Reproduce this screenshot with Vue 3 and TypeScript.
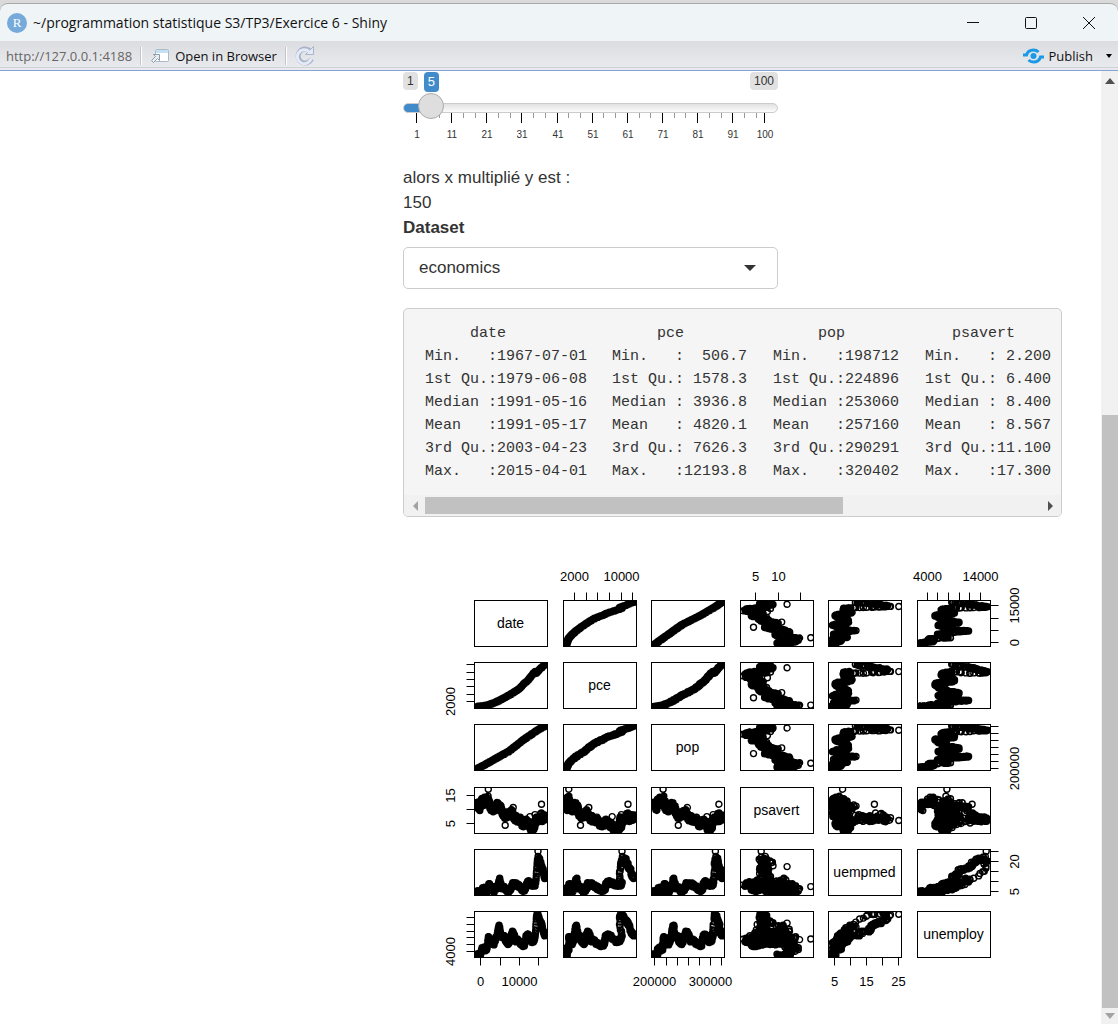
<script setup lang="ts">
import { computed, ref } from 'vue'

type Key = [number, number]
type VarName = 'date' | 'pce' | 'pop' | 'psavert' | 'uempmed' | 'unemploy'

interface Variable {
  name: VarName
  min: number
  max: number
  ticks: number[]
  first: number[]
  second: number[]
}

const y = ref(5)
const x = 30
const dataset = ref('economics')
const datasets = ['economics', 'faithfuld', 'seals']

const sliderFill = computed(() => ({ '--fill': `${((y.value - 1) / 99) * 93 + 4}%` }))

const sliderTicks = Array.from({ length: 31 }, (_, i) => {
  const value = i === 30 ? 100 : 1 + (i * 10) / 3
  return { major: i % 3 === 0, label: Math.round(value), x: Math.round(14 + ((value - 1) / 99) * 348) }
})

const summary = [
  ['     date', '     pce', '     pop', '   psavert'],
  ['Min.   :1967-07-01', 'Min.   :  506.7', 'Min.   :198712', 'Min.   : 2.200'],
  ['1st Qu.:1979-06-08', '1st Qu.: 1578.3', '1st Qu.:224896', '1st Qu.: 6.400'],
  ['Median :1991-05-16', 'Median : 3936.8', 'Median :253060', 'Median : 8.400'],
  ['Mean   :1991-05-17', 'Mean   : 4820.1', 'Mean   :257160', 'Mean   : 8.567'],
  ['3rd Qu.:2003-04-23', '3rd Qu.: 7626.3', '3rd Qu.:290291', '3rd Qu.:11.100'],
  ['Max.   :2015-04-01', 'Max.   :12193.8', 'Max.   :320402', 'Max.   :17.300'],
]

// first: labels on the top or bottom axis, second: labels on the left or right axis
const variables: Variable[] = [
  { name: 'date', min: -915, max: 16526, ticks: [0, 5000, 10000, 15000], first: [0, 10000], second: [0, 15000] },
  { name: 'pce', min: 506.7, max: 12193.8, ticks: [2000, 4000, 6000, 8000, 10000, 12000], first: [2000, 10000], second: [2000] },
  { name: 'pop', min: 198712, max: 320402, ticks: [200000, 220000, 240000, 260000, 280000, 300000, 320000], first: [200000, 300000], second: [200000] },
  { name: 'psavert', min: 2.2, max: 17.3, ticks: [5, 10, 15], first: [5, 10], second: [5, 15] },
  { name: 'uempmed', min: 4, max: 25.2, ticks: [5, 10, 15, 20, 25], first: [5, 15, 25], second: [5, 20] },
  { name: 'unemploy', min: 2685, max: 15352, ticks: [4000, 6000, 8000, 10000, 12000, 14000], first: [4000, 14000], second: [4000] },
]

// Anchor values of each series, by year
const anchors: Record<Exclude<VarName, 'date'>, Key[]> = {
  pce: [
    [1967.5, 507], [1969, 585], [1971, 680], [1973, 825], [1975, 985], [1977, 1230], [1979, 1510], [1981, 1870],
    [1983, 2180], [1985, 2630], [1987, 3000], [1989, 3500], [1991, 3900], [1993, 4380], [1995, 4880], [1997, 5440],
    [1999, 6120], [2000, 6620], [2001, 7040], [2002, 7250], [2003, 7610], [2005, 8580], [2007, 9570], [2008, 9960],
    [2008.6, 10130], [2009, 9790], [2009.5, 9830], [2010, 10060], [2011, 10480], [2012, 10960], [2013, 11250],
    [2014, 11600], [2015.25, 12194],
  ],
  pop: [
    [1967.5, 198712], [1970, 204000], [1975, 215000], [1980, 226500], [1985, 237500], [1990, 248800], [1995, 265000],
    [2000, 281000], [2005, 294800], [2010, 308600], [2015.25, 320402],
  ],
  psavert: [
    [1967.5, 12.3], [1968, 11.9], [1968.5, 11], [1969, 10.5], [1969.5, 10.8], [1970, 12.2], [1971, 13.4], [1972, 12.4],
    [1973, 12.8], [1974, 13.5], [1975, 13.4], [1975.8, 13], [1976.5, 11.4], [1977.5, 10.5], [1979, 10.3],
    [1980, 10.5], [1981, 11.2], [1982, 11.9], [1983, 10.5], [1984, 11], [1985, 9.4], [1986, 8.4], [1987, 7.5],
    [1988, 8], [1989, 8.3], [1990, 8.4], [1991, 8.7], [1992, 9.4], [1993, 7.9], [1994, 6.9], [1995, 7], [1996, 6.4],
    [1997, 6.2], [1998, 6.4], [1999, 5.2], [2000, 4.7], [2001, 5], [2002, 5.8], [2003, 5.2], [2004, 4.9], [2005, 3.6],
    [2005.7, 3.3], [2006, 3.7], [2007, 3.5], [2008, 4.2], [2008.8, 5.8], [2009.4, 6.6], [2010, 6.2], [2011, 6.5],
    [2012, 7.4], [2012.8, 8.4], [2013.2, 6.2], [2014, 6.9], [2015.25, 7.5],
  ],
  uempmed: [
    [1967.5, 4.8], [1969.5, 4.7], [1970.5, 5.1], [1971.5, 6.3], [1972.3, 6.6], [1973.5, 5.4], [1974.6, 5.2],
    [1975.3, 7.6], [1975.9, 8.6], [1977, 7.2], [1978, 6.3], [1979.5, 5.4], [1980.5, 7.1], [1981.5, 6.9],
    [1982.5, 8.8], [1983, 10.3], [1983.4, 11.3], [1983.9, 9.3], [1985, 7.2], [1986.5, 7], [1988, 6.1], [1989.5, 5.1],
    [1990.5, 5.4], [1991.5, 6.9], [1992.5, 8.7], [1993.5, 8.5], [1994.5, 9], [1996, 8.2], [1997.5, 7.6], [1999, 6.4],
    [2000.6, 5.8], [2001.5, 6.6], [2002.5, 8.9], [2003.5, 10], [2004.5, 9.3], [2006, 8.5], [2007.5, 8.4],
    [2008.4, 8.6], [2008.9, 10.2], [2009.3, 13], [2009.6, 16.6], [2010, 20], [2010.4, 22], [2011, 21.3],
    [2011.6, 21], [2012.2, 19.8], [2013, 17.4], [2014, 16], [2014.6, 13.4], [2015.25, 12],
  ],
  unemploy: [
    [1967.5, 3000], [1968.5, 2900], [1969.5, 2950], [1970, 3250], [1970.9, 4950], [1971.7, 5050], [1972.5, 4850],
    [1973.7, 4400], [1974.5, 5000], [1975.35, 8100], [1976, 7350], [1977, 7250], [1978, 6300], [1979.4, 6050],
    [1980, 6700], [1980.5, 8050], [1981.3, 8000], [1982, 9700], [1982.9, 11700], [1983.4, 11000], [1984.2, 8800],
    [1985.5, 8350], [1986.5, 8350], [1987.5, 7300], [1989.2, 6400], [1990.4, 6700], [1991.3, 8600], [1992.5, 9800],
    [1993.5, 8900], [1994.9, 7200], [1996, 7350], [1997.5, 6700], [1999, 5950], [2000.3, 5700], [2001.2, 6150],
    [2001.9, 8200], [2003.4, 9000], [2004.5, 8200], [2006, 7050], [2007, 6900], [2008, 7650], [2008.6, 9100],
    [2009, 11900], [2009.4, 14400], [2009.8, 15000], [2010.3, 14950], [2011, 14200], [2012, 12900], [2013, 12100],
    [2014, 10300], [2015.25, 8700],
  ],
}

// Month to month variation around the anchors
const spread: Record<Exclude<VarName, 'date'>, number> = {
  pce: 110,
  pop: 1300,
  psavert: 1.05,
  uempmed: 0.8,
  unemploy: 400,
}

const outliers: Record<number, [VarName, number]> = {
  94: ['psavert', 17.3],
  92: ['psavert', 14.8],
  62: ['psavert', 14.5],
  237: ['psavert', 4.5],
  305: ['psavert', 10.8],
  448: ['psavert', 7.6],
  490: ['psavert', 8.3],
  545: ['psavert', 12],
  515: ['uempmed', 25.2],
  456: ['psavert', 2.2],
}

function interpolate(keys: Key[], t: number): number {
  const next = keys.findIndex((k) => k[0] >= t)
  if (next <= 0) return next === 0 ? keys[0][1] : keys[keys.length - 1][1]
  const [t0, v0] = keys[next - 1]
  const [t1, v1] = keys[next]
  return v0 + ((v1 - v0) * (t - t0)) / (t1 - t0)
}

function noise(i: number, seed: number): number {
  const n = Math.sin(i * 12.9898 + seed * 78.233) * 43758.5453
  return (n - Math.floor(n)) * 2 - 1
}

const observations = Array.from({ length: 574 }, (_, i) => {
  const t = 1967.5 + i / 12
  const series = (name: Exclude<VarName, 'date'>, seed: number) =>
    interpolate(anchors[name], t) + noise(i, seed) * spread[name]
  const row: Record<VarName, number> = {
    date: -915 + i * 30.437,
    pce: series('pce', 4),
    pop: series('pop', 5),
    psavert: series('psavert', 1),
    uempmed: series('uempmed', 2),
    unemploy: series('unemploy', 3),
  }
  const special = outliers[i]
  if (special) row[special[0]] = special[1]
  return row
})

const PANEL_W = 73
const PANEL_H = 46
const left = (col: number) => Math.round(71 + col * 88.6) + 0.5
const top = (row: number) => Math.round(62 + row * 62.2) + 0.5

function scale(v: Variable, value: number): number {
  const pad = (v.max - v.min) * 0.04
  return (value - v.min + pad) / (v.max - v.min + 2 * pad)
}

interface Panel {
  id: string
  x: number
  y: number
  label: string
  path: string
}

const panels: Panel[] = []
variables.forEach((rowVar, r) => {
  variables.forEach((colVar, c) => {
    const px = left(c)
    const py = top(r)
    const path =
      r === c
        ? ''
        : observations
            .map((o) => {
              const cx = px + scale(colVar, o[colVar.name]) * PANEL_W
              const cy = py + PANEL_H - scale(rowVar, o[rowVar.name]) * PANEL_H
              return `M${(cx - 3).toFixed(1)} ${cy.toFixed(1)}a3 3 0 1 0 6 0a3 3 0 1 0 -6 0`
            })
            .join('')
    panels.push({ id: `p${r}${c}`, x: px, y: py, label: r === c ? rowVar.name : '', path })
  })
})

interface Tick {
  d: string
  x: number
  y: number
  text: string
  turned: boolean
}

const ticks: Tick[] = []
variables.forEach((v, i) => {
  const onTop = i % 2 === 1
  v.ticks.forEach((value) => {
    const tx = Math.floor(left(i) + scale(v, value) * PANEL_W) + 0.5
    const ty = Math.floor(top(i) + PANEL_H - scale(v, value) * PANEL_H) + 0.5
    ticks.push({
      d: onTop ? `M${tx} ${top(0)}v-8` : `M${tx} ${top(5) + PANEL_H}v8`,
      x: tx,
      y: onTop ? 43 : 448,
      text: v.first.includes(value) ? String(value) : '',
      turned: false,
    })
    ticks.push({
      d: onTop ? `M${left(0)} ${ty}h-8` : `M${left(5) + PANEL_W} ${ty}h8`,
      x: onTop ? 52 : 616,
      y: ty,
      text: v.second.includes(value) ? String(value) : '',
      turned: true,
    })
  })
})
</script>

<template>
  <div class="window">
    <header class="titlebar">
      <span class="app-icon">R</span>
      <h1>~/programmation statistique S3/TP3/Exercice 6 - Shiny</h1>
      <div class="controls">
        <button type="button" aria-label="Minimize">
          <svg width="12" height="12"><path d="M0 5.500h12" /></svg>
        </button>
        <button type="button" aria-label="Maximize">
          <svg width="12" height="12"><rect x="0.500" y="0.500" width="11" height="11" rx="1" /></svg>
        </button>
        <button type="button" aria-label="Close">
          <svg width="12" height="12"><path d="M0 0l12 12M12 0L0 12" /></svg>
        </button>
      </div>
    </header>

    <nav class="toolbar">
      <span class="url">http://127.0.0.1:4188</span>
      <span class="divider"></span>
      <button type="button" class="tool">
        <svg width="20" height="16" viewBox="0 0 20 16">
          <rect x="5.500" y="1.500" width="13" height="12" rx="1" fill="#fff" stroke="#a9b9c6" />
          <path d="M6 2h12v3H6z" fill="#c3e1f3" />
          <path d="M3.500 6.500h6v6l-2-2-4 4-2-2 4-4z" fill="#e9eef3" stroke="#8d9dab" />
        </svg>
        <span>Open in Browser</span>
      </button>
      <span class="divider"></span>
      <button type="button" class="tool reload" aria-label="Reload">
        <svg width="20" height="20" viewBox="0 0 20 20" fill="none">
          <path d="M16.500 13a7 7 0 1 1-1.500-8" stroke="#a9b3c9" stroke-width="5" />
          <path d="M10.500 8.500h8v-8z" fill="#e4eaf7" stroke="#a9b3c9" />
          <path d="M16 12.800a7 7 0 1 1-2-7.300" stroke="#e4eaf7" stroke-width="3" />
        </svg>
      </button>
      <button type="button" class="tool publish">
        <svg width="21" height="16" viewBox="0 0 21 16" fill="none" stroke="#1a9ae6" stroke-width="3">
          <circle cx="10.500" cy="8" r="3" fill="#1a9ae6" stroke="none" />
          <path d="M0 7h3.500C4.500 3.500 7.500 2 10.500 2q3 0 5 2" />
          <path d="M21 9h-3.500c-1 3.500-4 5-7 5q-3 0-5-2" />
        </svg>
        <span>Publish</span>
      </button>
      <button type="button" class="tool caret" aria-label="Publish options">
        <svg width="6" height="4"><path d="M0 0h6L3 4z" /></svg>
      </button>
    </nav>

    <div class="viewport">
      <main>
        <div class="slider">
          <div class="badges">
            <span class="badge">1</span>
            <output class="badge current" for="y-value">{{ y }}</output>
            <span class="badge last">100</span>
          </div>
          <input id="y-value" v-model.number="y" type="range" min="1" max="100" aria-label="y" :style="sliderFill" />
          <svg class="scale" viewBox="0 0 375 28" aria-hidden="true">
            <g v-for="t in sliderTicks" :key="t.x">
              <path :d="`M${t.x - 0.5} 0v${t.major ? 10 : 5}`" :stroke="t.major ? '#000' : '#999'" />
              <text v-if="t.major" :x="t.x" y="25">{{ t.label }}</text>
            </g>
          </svg>
        </div>

        <p>alors x multiplié y est :</p>
        <p>{{ x * y }}</p>
        <label for="dataset">Dataset</label>
        <div class="select">
          <select id="dataset" v-model="dataset">
            <option v-for="d in datasets" :key="d">{{ d }}</option>
          </select>
          <svg width="12" height="6"><path d="M0 0h12L6 6z" /></svg>
        </div>

        <section class="summary">
          <table>
            <thead>
              <tr>
                <th v-for="h in summary[0]" :key="h" scope="col">{{ h }}</th>
              </tr>
            </thead>
            <tbody>
              <tr v-for="row in summary.slice(1)" :key="row[0]">
                <td v-for="cell in row" :key="cell">{{ cell }}</td>
              </tr>
            </tbody>
          </table>
          <div class="hscroll">
            <button type="button" aria-label="Scroll left">
              <svg width="6" height="10"><path d="M6 0v10L1 5z" fill="#a3a3a3" /></svg>
            </button>
            <div class="htrack"><div class="hthumb"></div></div>
            <button type="button" aria-label="Scroll right">
              <svg width="6" height="10"><path d="M0 0v10L5 5z" fill="#505050" /></svg>
            </button>
          </div>
        </section>

        <svg class="plot" viewBox="0 0 659 470" role="img" aria-label="Scatterplot matrix">
          <defs>
            <clipPath v-for="p in panels" :id="p.id" :key="p.id">
              <rect :x="p.x" :y="p.y" :width="PANEL_W" :height="PANEL_H" />
            </clipPath>
          </defs>
          <g v-for="p in panels" :key="p.id">
            <path v-if="p.path" :d="p.path" :clip-path="`url(#${p.id})`" class="points" />
            <rect :x="p.x" :y="p.y" :width="PANEL_W" :height="PANEL_H" class="frame" />
            <text v-if="p.label" :x="p.x + 36" :y="p.y + 27" class="name">{{ p.label }}</text>
          </g>
          <g v-for="(t, i) in ticks" :key="i">
            <path :d="t.d" class="frame" />
            <text
              v-if="t.text"
              :x="t.x"
              :y="t.y"
              :transform="t.turned ? `rotate(-90 ${t.x} ${t.y})` : undefined"
              class="tick"
            >
              {{ t.text }}
            </text>
          </g>
        </svg>
      </main>

      <aside class="vscroll">
        <button type="button" class="up" aria-label="Scroll up">
          <svg width="10" height="6"><path d="M0 6h10L5 0z" fill="#505050" /></svg>
        </button>
        <div class="vtrack"><div class="vthumb"></div></div>
        <button type="button" class="down" aria-label="Scroll down">
          <svg width="10" height="6"><path d="M0 0h10L5 6z" fill="#a3a3a3" /></svg>
        </button>
      </aside>
    </div>
  </div>
</template>

<style>
body {
  margin: 0;
  background: #fff;
}
</style>

<style scoped>
.window {
  box-sizing: border-box;
  display: flex;
  flex-direction: column;
  min-height: 100vh;
  padding-top: 3px;
  background: #dadada;
  color: #333;
  font-family: 'Liberation Sans', Arial, sans-serif;
}

button {
  display: flex;
  align-items: center;
  justify-content: center;
  margin: 0;
  padding: 0;
  border: 0;
  background: none;
  color: inherit;
  font: inherit;
}

.titlebar {
  display: flex;
  align-items: center;
  height: 37px;
  padding-left: 7px;
  border-top: 1px solid #a9a9a9;
  border-radius: 8px 8px 0 0;
  background: #eff4f7;
  color: #111;
  font-family: 'Open Sans', 'Noto Sans', sans-serif;
}

.app-icon {
  width: 20px;
  height: 20px;
  border-radius: 50%;
  background: #75aadb;
  color: #fff;
  font: 13px/20px 'Liberation Serif', serif;
  text-align: center;
}

h1 {
  flex: 1;
  margin: 0 0 0 6px;
  font-size: 14px;
  font-weight: 400;
}

.controls {
  display: flex;
}

.controls button {
  width: 58px;
  height: 36px;
}

.controls svg {
  fill: none;
  stroke: #111;
}

.toolbar {
  box-sizing: border-box;
  display: flex;
  align-items: center;
  height: 27px;
  padding: 4px 6px 0;
  border-bottom: 1px solid #cfd1d6;
  background: linear-gradient(#dcdde1, #e9eaee);
  box-shadow: 0 2px #e9eaee, 0 3px #85a2d4;
  color: #111;
  font: 13px/20px 'Open Sans', 'Noto Sans', sans-serif;
}

.url {
  color: #666;
}

.divider {
  width: 1px;
  height: 18px;
  margin: 0 8px;
  border-right: 1px solid #fff;
  background: #c3c4c8;
}

.tool {
  gap: 5px;
}

.publish {
  margin-left: auto;
}

.caret {
  margin-left: 13px;
}

.viewport {
  display: flex;
  flex: 1;
  margin-top: 3px;
  background: #fff;
}

main {
  flex: 1;
  min-width: 0;
  padding: 1px 39px 0 403px;
  font-size: 17px;
  line-height: 25px;
}

.slider {
  width: 375px;
  margin-bottom: 24px;
}

.badges {
  display: flex;
  align-items: flex-start;
  height: 20px;
  gap: 6px;
}

.badge {
  padding: 0 4px;
  border-radius: 4px;
  background: #e1e1e1;
  font-size: 12px;
  line-height: 18px;
}

.current {
  background: #428bca;
  color: #fff;
  font-size: 13px;
  line-height: 20px;
}

.last {
  margin-left: auto;
}

input[type='range'] {
  position: relative;
  z-index: 1;
  display: block;
  width: 100%;
  height: 28px;
  margin: 0;
  appearance: none;
  background: none;
}

input[type='range']::-webkit-slider-runnable-track {
  box-sizing: border-box;
  height: 10px;
  margin-top: 4px;
  border: 1px solid #ccc;
  border-radius: 8px;
  background:
    linear-gradient(#428bca, #428bca) 0 0 / var(--fill) 100% no-repeat border-box,
    linear-gradient(#dedede, #fff) border-box;
}

input[type='range']::-webkit-slider-thumb {
  box-sizing: border-box;
  width: 26px;
  height: 26px;
  margin-top: -11px;
  appearance: none;
  border: 1px solid #ababab;
  border-radius: 50%;
  background: #dedede;
}

.scale {
  display: block;
  width: 100%;
  margin-top: -7px;
  fill: #333;
  font-size: 10px;
  text-anchor: middle;
}

p {
  margin: 0;
}

label {
  display: block;
  font-weight: 700;
}

.select {
  display: grid;
  width: 375px;
  margin: 7px 0 19px;
}

.select > * {
  grid-area: 1 / 1;
}

.select svg {
  place-self: center end;
  margin-right: 22px;
  fill: #333;
  pointer-events: none;
}

select {
  height: 42px;
  padding: 0 15px 2px;
  border: 1px solid #ccc;
  border-radius: 5px;
  appearance: none;
  background: #fff;
  color: #333;
  font: inherit;
}

.summary {
  overflow: hidden;
  border: 1px solid #ccc;
  border-radius: 5px;
  background: #f5f5f5;
}

table {
  width: 636px;
  margin: 13px 0 12px 21px;
  border-collapse: collapse;
  table-layout: fixed;
  font: 15px/23px 'Liberation Mono', Consolas, monospace;
}

th,
td {
  padding: 0;
  font-weight: 400;
  text-align: left;
  white-space: pre;
}

th:nth-child(1) {
  width: 187px;
}

th:nth-child(2) {
  width: 161px;
}

th:nth-child(3) {
  width: 152px;
}

.hscroll {
  display: flex;
  height: 21px;
  background: #f1f1f1;
}

.hscroll button {
  width: 21px;
}

.htrack {
  flex: 1;
  padding: 2px 0;
}

.hthumb {
  width: 68%;
  height: 17px;
  background: #c1c1c1;
}

.plot {
  display: block;
  width: 100%;
  margin-top: 21px;
  font-family: 'Liberation Sans', Arial, sans-serif;
}

.points {
  fill: none;
  stroke: #000;
  stroke-width: 1.4;
}

.frame {
  fill: none;
  stroke: #000;
}

.name,
.tick {
  fill: #000;
  text-anchor: middle;
}

.name {
  font-size: 14px;
}

.tick {
  font-size: 13px;
}

.vscroll {
  display: flex;
  flex-direction: column;
  width: 17px;
  background: #f1f1f1;
}

.up {
  flex: 0 0 20px;
}

.down {
  flex: 0 0 16px;
}

.vtrack {
  display: flex;
  flex: 1;
  flex-direction: column;
  justify-content: flex-end;
  padding-left: 1px;
}

.vthumb {
  height: 64.7%;
  background: #c1c1c1;
}
</style>
